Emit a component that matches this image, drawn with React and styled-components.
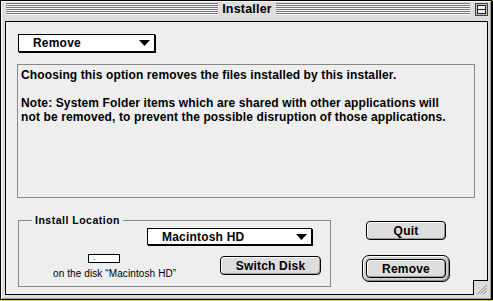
import React from 'react';
import styled, { createGlobalStyle } from 'styled-components';

const GlobalStyle = createGlobalStyle`
  html, body {
    margin: 0;
    padding: 0;
    background: #d6d64a;
  }
  body {
    font-family: "Liberation Sans", Arial, sans-serif;
    color: #000;
  }
`;

const Window = styled.div`
  width: 492px;
  height: 300px;
  box-sizing: border-box;
  border: 1px solid #000;
  box-shadow: 1px 1px 0 #000, inset 1px 1px 0 #fff, inset -1px -1px 0 #999;
  background: #dddddd;
  display: flex;
  flex-direction: column;
`;

const TitleBar = styled.div`
  height: 20px;
  flex: none;
  display: grid;
  grid-template-columns: 1fr auto 1fr;
  align-items: start;
  padding: 0 3px 0 5px;
`;

const Stripes = styled.div`
  flex: 1;
  height: 12px;
  margin-top: 2px;
  background: repeating-linear-gradient(to bottom, #777 0 1px, #f6f6f6 1px 2px);
`;

const Title = styled.div`
  padding: 0 4px;
  font-size: 12.5px;
  font-weight: bold;
  line-height: 17px;
  letter-spacing: 0.2px;
`;

const TitleRight = styled.div`
  display: flex;
  align-items: flex-start;
  gap: 5px;
`;

const ZoomBox = styled.svg`
  flex: none;
  margin-top: 2px;
`;

const Content = styled.div`
  flex: 1;
  position: relative;
  margin: 0 3px 4px 4px;
  border: 1px solid #000;
  background: #eeeeee;
  display: flex;
  flex-direction: column;
  padding: 12px 0 0 11px;
`;

const Popup = styled.div`
  width: ${p => p.$w}px;
  height: ${p => p.$h}px;
  box-sizing: border-box;
  margin-left: ${p => p.$left || 0}px;
  border: 1px solid #000;
  box-shadow: 1px 1px 0 #000;
  background: #fff;
  display: flex;
  align-items: center;
  justify-content: space-between;
  padding: 0 4px 0 14px;
  font-size: 12px;
  font-weight: bold;
  letter-spacing: 0.2px;
`;

const InfoBox = styled.div`
  margin-top: 12px;
  width: 458px;
  height: 134px;
  box-sizing: border-box;
  border: 1px solid #888;
  padding: 3px 3px;
  font-size: 12px;
  font-weight: bold;
  line-height: 14px;
  letter-spacing: 0.12px;
  white-space: nowrap;
`;

const Para = styled.p`
  margin: 0 0 14px;
`;

const BottomRow = styled.div`
  margin-top: 16px;
  display: flex;
  align-items: flex-start;
`;

const Group = styled.fieldset`
  margin: 0 0 0 1px;
  padding: 0;
  min-width: 0;
  width: 313px;
  height: 73px;
  box-sizing: border-box;
  border: 1px solid #888;
`;

const GroupLabel = styled.legend`
  margin-left: 13px;
  padding: 0 3px;
  font-size: 10.5px;
  font-weight: bold;
  line-height: 12px;
  letter-spacing: 0.5px;
`;

const DiskRow = styled.div`
  display: flex;
  justify-content: flex-end;
  padding-right: 18px;
  margin-top: 2px;
`;

const DiskInfoRow = styled.div`
  display: flex;
  align-items: flex-start;
`;

const DiskInfo = styled.div`
  margin-left: 34px;
  width: 124px;
  display: flex;
  flex-direction: column;
  align-items: flex-start;
`;

const DiskIcon = styled.div`
  margin: 9px 0 0 35px;
  width: 32px;
  height: 9px;
  box-sizing: border-box;
  border: 1px solid #000;
  background: #fff;
  font-size: 8px;
  line-height: 5px;
  padding-left: 4px;
`;

const Caption = styled.div`
  margin-top: 5px;
  font-size: 10px;
  line-height: 12px;
  letter-spacing: 0.1px;
  white-space: nowrap;
`;

const Button = styled.button`
  width: ${p => p.$w || 80}px;
  height: 19px;
  box-sizing: border-box;
  margin: ${p => p.$m || 0};
  padding: 0;
  border: 1px solid #000;
  border-radius: 4px;
  background: #dddddd;
  box-shadow: inset 1px 1px 0 #fff, inset -1px -1px 0 #999;
  font: bold 12px "Liberation Sans", Arial, sans-serif;
  letter-spacing: 0.2px;
  color: #000;
`;

const ButtonColumn = styled.div`
  margin-left: 31px;
  width: 88px;
  display: flex;
  flex-direction: column;
  align-items: center;
`;

const DefaultRing = styled.div`
  margin-top: 15px;
  padding: 3px;
  border: 1px solid #000;
  border-radius: 7px;
  background: #cccccc;
  box-shadow: inset 1px 1px 0 #fff, inset -1px -1px 0 #888;
  display: flex;
`;

const GrowBox = styled.div`
  position: absolute;
  right: -1px;
  bottom: -1px;
  width: 15px;
  height: 15px;
  box-sizing: border-box;
  border-top: 1px solid #000;
  border-left: 1px solid #000;
  background: #dddddd;
  display: flex;
  align-items: center;
  justify-content: center;
`;

const Arrow = () => (
  <svg width="11" height="6" viewBox="0 0 11 6">
    <polygon points="0,0 11,0 5.5,6" fill="#000" />
  </svg>
);

const App = () => {
  return (
    <>
      <GlobalStyle />
      <Window>
        <TitleBar>
          <Stripes />
          <Title>Installer</Title>
          <TitleRight>
            <Stripes />
            <ZoomBox width="13" height="13" viewBox="0 0 13 13">
              <rect x="0.5" y="0.5" width="12" height="12" fill="#bbb" stroke="#444" />
              <rect x="2.5" y="2.5" width="8" height="8" fill="#eee" stroke="#222" />
              <line x1="2" y1="6.5" x2="11" y2="6.5" stroke="#222" />
            </ZoomBox>
          </TitleRight>
        </TitleBar>
        <Content>
          <Popup $w={137} $h={18} $left={1}>
            <span>Remove</span>
            <Arrow />
          </Popup>
          <InfoBox>
            <Para>Choosing this option removes the files installed by this installer.</Para>
            <Para>
              Note: System Folder items which are shared with other applications will
              <br />
              not be removed, to prevent the possible disruption of those applications.
            </Para>
          </InfoBox>
          <BottomRow>
            <Group>
              <GroupLabel>Install Location</GroupLabel>
              <DiskRow>
                <Popup $w={165} $h={17}>
                  <span>Macintosh HD</span>
                  <Arrow />
                </Popup>
              </DiskRow>
              <DiskInfoRow>
                <DiskInfo>
                  <DiskIcon>.</DiskIcon>
                  <Caption>on the disk “Macintosh HD”</Caption>
                </DiskInfo>
                <Button $w={101} $m="11px 0 0 43px">Switch Disk</Button>
              </DiskInfoRow>
            </Group>
            <ButtonColumn>
              <Button $m="7px 0 0">Quit</Button>
              <DefaultRing>
                <Button>Remove</Button>
              </DefaultRing>
            </ButtonColumn>
          </BottomRow>
          <GrowBox>
            <svg width="11" height="11" viewBox="0 0 11 11">
              <g strokeWidth="1">
                <line x1="1" y1="10.5" x2="10.5" y2="1" stroke="#fff" />
                <line x1="1.5" y1="11" x2="11" y2="1.5" stroke="#777" />
                <line x1="4" y1="10.5" x2="10.5" y2="4" stroke="#fff" />
                <line x1="4.5" y1="11" x2="11" y2="4.5" stroke="#777" />
                <line x1="7" y1="10.5" x2="10.5" y2="7" stroke="#fff" />
                <line x1="7.5" y1="11" x2="11" y2="7.5" stroke="#777" />
              </g>
            </svg>
          </GrowBox>
        </Content>
      </Window>
    </>
  );
};

export default App;
